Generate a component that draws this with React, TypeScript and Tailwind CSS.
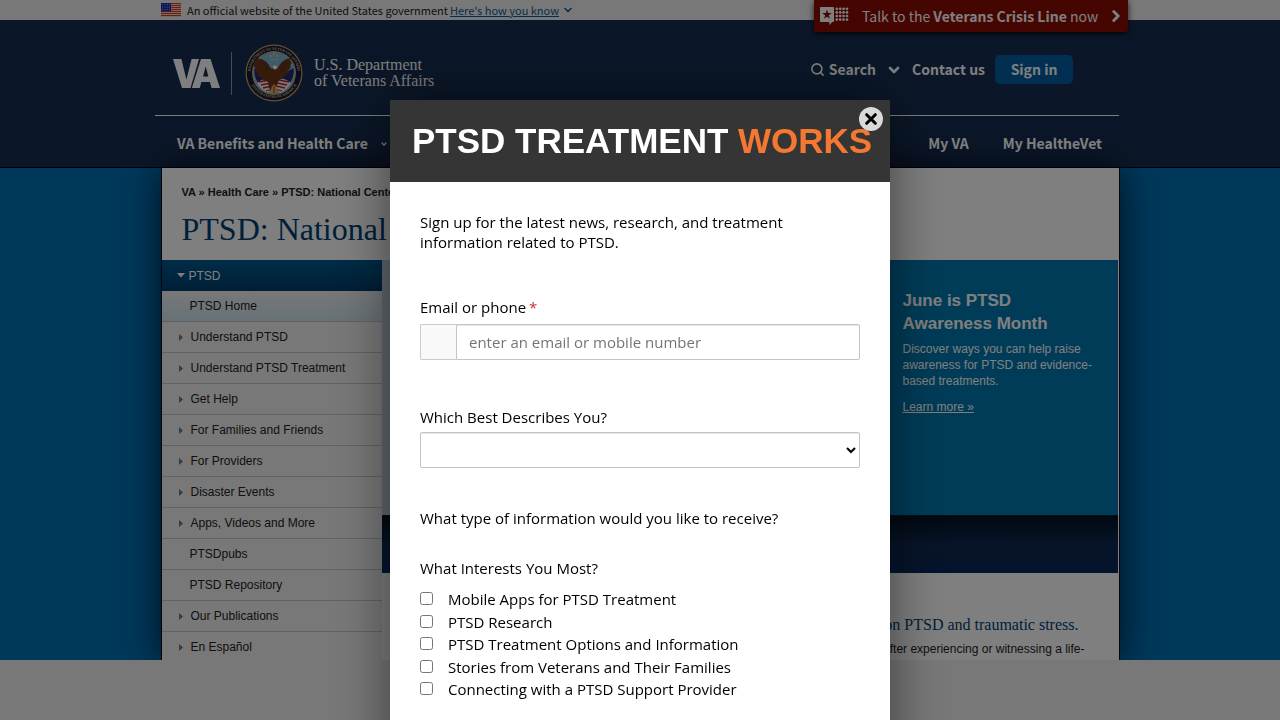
import { Search, ChevronDown, ChevronRight } from "lucide-react";

const menu: { label: string; children?: boolean; active?: boolean }[] = [
  { label: "PTSD Home", active: true },
  { label: "Understand PTSD", children: true },
  { label: "Understand PTSD Treatment", children: true },
  { label: "Get Help", children: true },
  { label: "For Families and Friends", children: true },
  { label: "For Providers", children: true },
  { label: "Disaster Events", children: true },
  { label: "Apps, Videos and More", children: true },
  { label: "PTSDpubs" },
  { label: "PTSD Repository" },
  { label: "Our Publications", children: true },
  { label: "En Español", children: true },
];

const interests = [
  "Mobile Apps for PTSD Treatment",
  "PTSD Research",
  "PTSD Treatment Options and Information",
  "Stories from Veterans and Their Families",
  "Connecting with a PTSD Support Provider",
];

function Flag() {
  return (
    <svg width="20" height="14" viewBox="0 0 20 14" aria-hidden="true">
      <rect width="20" height="14" fill="#fff" />
      {[0, 2, 4, 6, 8, 10, 12].map((y) => (
        <rect key={y} y={y} width="20" height="1.25" fill="#db3e1f" />
      ))}
      <rect width="10" height="8.5" fill="#1e33b1" />
      {[1.5, 4, 6.5].map((y) =>
        [1.5, 4, 6.5, 8.5].map((x) => <circle key={`${x}-${y}`} cx={x} cy={y} r="0.5" fill="#aab2ea" />)
      )}
    </svg>
  );
}

function Seal() {
  return (
    <svg width="58" height="58" viewBox="0 0 58 58" role="img" aria-label="Seal">
      <defs>
        <path id="ring-top" d="M5.3 32a23.8 23.8 0 1 1 47.4 0" />
        <path id="ring-bottom" d="M3.5 33a26 26 0 0 0 51 0" />
      </defs>
      <circle cx="29" cy="29" r="28.5" fill="#c9a84c" />
      <circle cx="29" cy="29" r="27.3" fill="#17173f" />
      <circle cx="29" cy="29" r="22" fill="#c9a84c" />
      <circle cx="29" cy="29" r="21.2" fill="#7fb4d4" />
      <g fill="#dcc680" fontFamily="Liberation Serif, serif" fontWeight="700" fontSize="3.7" textAnchor="middle">
        <text>
          <textPath href="#ring-top" startOffset="50%">DEPARTMENT OF VETERANS AFFAIRS</textPath>
        </text>
        <text>
          <textPath href="#ring-bottom" startOffset="50%">UNITED STATES OF AMERICA</textPath>
        </text>
      </g>
      <g fill="#f4d04a">
        <circle cx="29" cy="10" r="1" />
        <circle cx="25.5" cy="12" r="1" />
        <circle cx="32.5" cy="12" r="1" />
        <circle cx="27" cy="15.5" r="1" />
        <circle cx="31" cy="15.5" r="1" />
      </g>
      <path d="M9.5 24l10 6 3 10-7 2c-4-4-7-11-6-18zM48.5 24l-10 6-3 10 7 2c4-4 7-11 6-18z" fill="#24266d" />
      <path d="M12 39c4-4 9-5 14-4l3 8-6 6c-5-2-9-6-11-10zM46 39c-4-4-9-5-14-4l-3 8 6 6c5-2 9-6 11-10z" fill="#eee" />
      <path
        d="M14 38l10-2M16 41l10-2M18 44l9-2M21 47l7-2M44 38l-10-2M42 41l-10-2M40 44l-9-2M37 47l-7-2"
        stroke="#b3202c"
        strokeWidth="1.3"
      />
      <path
        d="M12 15c5-1 10 2 13 8l2 2c1-3 5-4 6-1 2-5 6-9 13-10l-1 3 2 1-2 4 1 1-3 4 1 2-5 3-1 2-4 2-2 5-3 5-2 1-3-3-1-6-5-2-1-2-4-2 0-2-3-3 1-2-3-4z"
        fill="#6d371a"
      />
      <path d="M17 18l7 8M17 23l7 6M42 18l-7 8M41 24l-7 5" stroke="#4a2612" strokeWidth="0.8" fill="none" />
      <path d="M27.5 23c1-2 4-2 5 0l-1 2-2.500.5z" fill="#fff" />
      <path d="M26.5 43l2.500-3 2.500 3 1 7-3.500-2-3.500 2z" fill="#e0b73c" />
      <path d="M29 42v7" stroke="#b3202c" strokeWidth="1" />
    </svg>
  );
}

function CrisisIcon() {
  return (
    <svg width="29" height="18" viewBox="0 0 29 18" fill="#fff" aria-hidden="true">
      <path d="M.7 0h12.600a.7.7 0 0 1 .7.7v13.600a.7.7 0 0 1-.7.7H12.300L9.300 18V15H.7a.7.7 0 0 1-.7-.7V.7A.7.7 0 0 1 .7 0z" />
      <path d="M7 2.600l1.200 3.400 3.600.1-2.900 2.200 1 3.500L7 9.800l-2.900 2 1-3.500-2.900-2.200 3.600-.1z" fill="#8b0a03" />
      {[1.8, 5.4, 9, 12.6].map((y) =>
        [16.8, 20.2, 23.6, 27].map((x) => <circle key={`${x}-${y}`} cx={x} cy={y} r="1.35" />)
      )}
    </svg>
  );
}

function GovBanner() {
  return (
    <div className="bg-[#f0f0f0] text-[#1b1b1b]">
      <div className="mx-auto flex h-5 max-w-[970px] items-center pl-[6px] text-[11px] leading-4">
        <Flag />
        <p className="ml-[6px]">An official website of the United States government</p>
        <a href="#how" className="ml-[2px] flex items-center text-[#005ea2]">
          <span className="underline">Here's how you know</span>
          <ChevronDown className="ml-[3px] h-3 w-3" strokeWidth={3} />
        </a>
      </div>
    </div>
  );
}

function Header() {
  return (
    <header className="border-b border-black bg-[#162e51] text-white">
      <div className="relative mx-auto max-w-[970px]">
        <a
          href="#crisis"
          className="absolute -top-5 -right-[3px] flex h-8 w-[314px] items-center rounded-b-[3px] bg-[#8b0a03] px-[6px] text-[14px] shadow-[0_2px_6px_rgba(0,0,0,0.8)]"
        >
          <CrisisIcon />
          <span className="ml-[13px] whitespace-nowrap">
            Talk to the <b>Veterans Crisis Line</b> now
          </span>
          <ChevronRight className="ml-auto h-4 w-3 scale-150" strokeWidth={4} />
        </a>
        <div className="mr-[6px] flex h-24 items-start justify-between border-b border-white">
          <a href="#home" className="flex items-center pt-6 pl-[18px]">
            <svg width="47" height="29" viewBox="0 0 47 29" fill="#fff" role="img" aria-label="VA">
              <path d="M0 0h8.400l5 20.500L18.600 0h7.400L17.500 29H9z" />
              <path d="M28 0h9.500L47 29h-8.400l-1.700-6h-8.500l-1.700 6h-7.900zM32.700 7.500l-2.700 10h5.400z" fillRule="evenodd" />
            </svg>
            <span className="mr-[13px] ml-[11px] h-[43px] border-l border-[#8b96a8]" />
            <Seal />
            <span className="ml-[11px] font-[Georgia,'Liberation_Serif',serif] text-[16px] leading-4">
              U.S. Department
              <br />
              of Veterans Affairs
            </span>
          </a>
          <div className="flex items-center pt-[35px] pr-[46px] text-[14px] font-bold">
            <button type="button" className="flex items-center">
              <Search className="mr-1 h-[15px] w-[15px]" strokeWidth={2.5} />
              Search
              <ChevronDown className="ml-[10px] h-4 w-4" strokeWidth={4} />
            </button>
            <a href="#contact" className="ml-[10px]">
              Contact us
            </a>
            <button type="button" className="ml-[10px] h-[29px] w-[78px] rounded-[5px] bg-[#005ea2]">
              Sign in
            </button>
          </div>
        </div>
        <nav className="flex h-[51px] items-center pt-1 pr-[23px] pl-[22px] text-[14px] font-bold">
          <a href="#benefits" className="flex items-center">
            VA Benefits and Health Care
            <ChevronDown className="ml-3 h-2 w-2" strokeWidth={4} />
          </a>
          <a href="#about" className="ml-8">
            About VA
          </a>
          <a href="#myva" className="ml-auto">
            My VA
          </a>
          <a href="#mhv" className="ml-[34px]">
            My HealtheVet
          </a>
        </nav>
      </div>
    </header>
  );
}

function Sidebar() {
  return (
    <nav className="w-[220px] shrink-0 bg-[#f0f0f0] text-[12px] text-[#222]">
      <a
        href="#ptsd"
        className="flex h-[31px] items-center bg-linear-to-b from-[#00598f] to-[#003e6b] pl-[15px] text-white"
      >
        <svg width="8" height="5" viewBox="0 0 8 5" className="mr-1" aria-hidden="true">
          <path d="M0 0h8L4 4.500z" fill="#fff" />
        </svg>
        PTSD
      </a>
      <ul>
        {menu.map((item) => (
          <li
            key={item.label}
            className={
              item.active
                ? "h-[31px] border-b border-[#c4c4c4] bg-linear-to-b from-[#f0f0f0] to-[#cfe4ee]"
                : "h-[31px] border-b border-[#c4c4c4]"
            }
          >
            <a href="#section" className={item.children ? "flex h-full items-center pl-[17px]" : "flex h-full items-center pl-7"}>
              {item.children && (
                <svg width="4" height="7" viewBox="0 0 4 7" className="mr-2" aria-hidden="true">
                  <path d="M0 0l4 3.500L0 7z" fill="#777" />
                </svg>
              )}
              {item.label}
            </a>
          </li>
        ))}
      </ul>
    </nav>
  );
}

function Content() {
  return (
    <div className="mx-auto w-[959px] max-w-full border-x border-[#000a20] bg-white font-['Liberation_Sans',Arial,sans-serif] shadow-[0_0_36px_rgba(0,0,20,0.75)]">
      <p className="pt-[17px] pl-5 text-[11px] leading-[14px] font-bold text-[#222]">
        VA » Health Care » PTSD: National Center for PTSD
      </p>
      <h1 className="pt-2 pb-[9px] pl-5 font-[Georgia,'Liberation_Serif',serif] text-[32px] leading-[44px] text-[#003e73]">
        PTSD: National
      </h1>
      <div className="flex">
        <Sidebar />
        <div className="min-w-0 flex-1 pr-px">
          <section className="flex h-[255px] bg-[#c2cde2]">
            <div className="flex-1" />
            <div className="w-[236px] bg-[#0078b0] pt-[29px] pl-[21px] text-white">
              <h2 className="text-[17px] leading-[23px] font-bold">
                June is PTSD
                <br />
                Awareness Month
              </h2>
              <p className="mt-[6px] text-[12px] leading-4 whitespace-nowrap">
                Discover ways you can help raise
                <br />
                awareness for PTSD and evidence-
                <br />
                based treatments.
              </p>
              <a href="#learn" className="mt-[10px] block text-[12px] leading-4 underline">
                Learn more »
              </a>
            </div>
          </section>
          <div className="h-[58px] border-t border-[#101c28] bg-linear-to-b from-[#031224] via-[#0f2850] via-50% to-[#08285c]" />
          <div className="flex flex-col items-end overflow-hidden pt-[41px] pr-[33px] text-right whitespace-nowrap">
            <h2 className="mr-[6px] font-[Georgia,'Liberation_Serif',serif] text-[16px] leading-[22px] text-[#003e73]">
              The world’s leading research and educational center on PTSD and traumatic stress.
            </h2>
            <p className="mt-1 text-[12px] leading-[18px] text-[#222]">
              PTSD is a mental health problem that some people develop after experiencing or witnessing a life-
            </p>
          </div>
        </div>
      </div>
    </div>
  );
}

function SignupDialog() {
  return (
    <div
      role="dialog"
      aria-label="PTSD Treatment Works"
      className="relative mx-auto mt-[100px] min-h-full w-[500px] max-w-full bg-white font-['Open_Sans','Noto_Sans',sans-serif] text-[15px] leading-5 text-black shadow-[0_0_50px_rgba(0,0,0,0.5)]"
    >
      <div className="flex h-[82px] items-center bg-[#353535] pl-[22px] font-['Liberation_Sans',Arial,sans-serif]">
        <h2 className="text-[35px] leading-10 font-bold whitespace-nowrap text-white">
          PTSD TREATMENT <span className="text-[#f57832]">WORKS</span>
        </h2>
      </div>
      <button
        type="button"
        aria-label="Close"
        className="absolute top-[7px] right-[7px] flex h-6 w-6 items-center justify-center rounded-full bg-[#d9d9d9]"
      >
        <svg width="12" height="12" viewBox="0 0 12 12" stroke="#000" strokeWidth="3" strokeLinecap="round" aria-hidden="true">
          <path d="M1.700 1.700l8.600 8.600M10.300 1.700l-8.600 8.600" />
        </svg>
      </button>
      <form className="px-[30px] pt-[30px]">
        <p>
          Sign up for the latest news, research, and treatment
          <br />
          information related to PTSD.
        </p>
        <label htmlFor="contact" className="mt-[45px] block">
          Email or phone<span className="ml-[3px] text-[#c9302c]">*</span>
        </label>
        <div className="mt-[7px] flex h-9">
          <span className="w-9 rounded-l-[2px] border border-r-0 border-[#ccc] bg-[#f9f9f9]" />
          <input
            id="contact"
            type="text"
            placeholder="enter an email or mobile number"
            className="min-w-0 flex-1 rounded-r-[2px] border border-[#c4c4c4] px-3 shadow-[inset_0_1px_1px_rgba(0,0,0,0.1)] placeholder:text-[#757575]"
          />
        </div>
        <label htmlFor="describes" className="mt-[47px] block">
          Which Best Describes You?
        </label>
        <select
          id="describes"
          className="mt-[5px] block h-9 w-full rounded-[2px] border border-[#c4c4c4] bg-white shadow-[inset_0_1px_1px_rgba(0,0,0,0.1)]"
        >
          <option></option>
        </select>
        <p className="mt-10">What type of information would you like to receive?</p>
        <fieldset className="mt-[30px]">
          <legend>What Interests You Most?</legend>
          <div className="mt-[10px] leading-normal">
            {interests.map((label) => (
              <label key={label} className="flex items-start">
                <input type="checkbox" className="mt-1 mr-[15px] h-[13px] w-[13px]" />
                {label}
              </label>
            ))}
          </div>
        </fieldset>
      </form>
    </div>
  );
}

export default function App() {
  return (
    <div className="h-screen overflow-hidden bg-[#f0f0f0] font-['Noto_Sans_CJK_SC',sans-serif]">
      <div className="h-[calc(100vh-60px)] overflow-hidden bg-[#0071b5]">
        <GovBanner />
        <Header />
        <Content />
      </div>
      <div className="fixed inset-0 overflow-hidden bg-black/50">
        <SignupDialog />
      </div>
    </div>
  );
}
